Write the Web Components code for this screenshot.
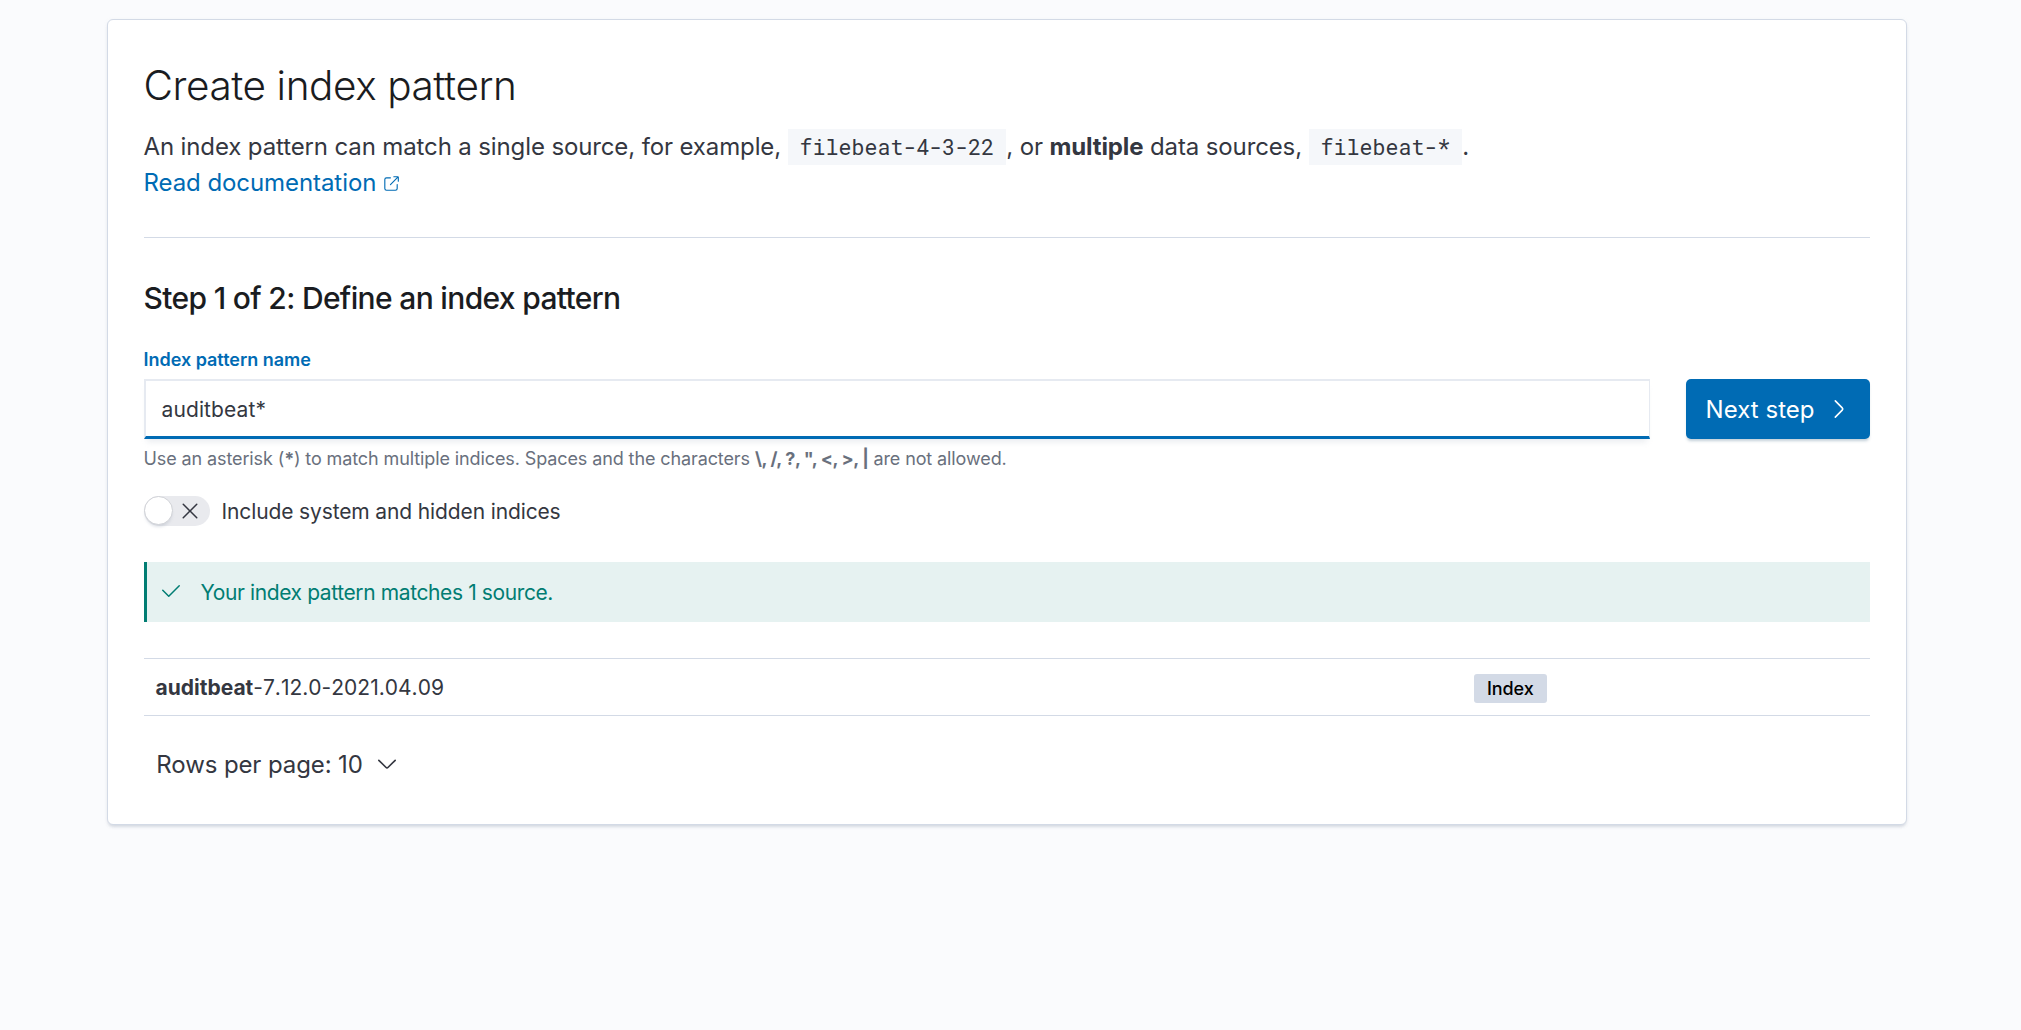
<!DOCTYPE html>
<html lang="en">
<head>
<meta charset="utf-8">
<title>Create index pattern</title>
<style>
html,body{margin:0;height:100%}
body{background:#fafbfd;font-family:Inter,"Liberation Sans",sans-serif;font-size:21px;color:#343741;letter-spacing:-.005em;font-kerning:normal}
</style>
</head>
<body>
<index-pattern-page></index-pattern-page>
<script>
const define = (name, css, html) => customElements.define(name, class extends HTMLElement {
  constructor() {
    super();
    this.attachShadow({mode: 'open'}).innerHTML =
      `<style>*{box-sizing:border-box}${css}</style>${typeof html === 'function' ? html(this) : html}`;
  }
});

const ICONS = {
  popout: 'M13 8.5a.5.5 0 111 0V12a2 2 0 01-2 2H4a2 2 0 01-2-2V4a2 2 0 012-2h3.5a.5.5 0 010 1H4a1 1 0 00-1 1v8a1 1 0 001 1h8a1 1 0 001-1V8.5zm-5.12.339a.5.5 0 11-.706-.707L13.305 2H10.5a.5.5 0 110-1H14a1 1 0 011 1v3.5a.5.5 0 11-1 0V2.72L7.88 8.838z',
  right: 'M5.157 13.069l4.611-4.685a.546.546 0 000-.768L5.158 2.93a.552.552 0 010-.771.53.53 0 01.759 0l4.61 4.684a1.65 1.65 0 010 2.312l-4.61 4.684a.53.53 0 01-.76 0 .552.552 0 010-.771z',
  down: 'M13.069 5.157L8.384 9.768a.546.546 0 01-.768 0L2.93 5.158a.552.552 0 00-.771 0 .53.53 0 000 .759l4.684 4.61a1.65 1.65 0 002.312 0l4.684-4.61a.53.53 0 000-.76.552.552 0 00-.771 0z',
  check: 'M6.5 12a.502.502 0 01-.354-.146l-4-4a.502.502 0 01.708-.708L6.5 10.793l6.646-6.647a.502.502 0 01.708.708l-7 7A.502.502 0 016.5 12',
  cross: 'M7.293 8L3.146 3.854a.5.5 0 11.708-.708L8 7.293l4.146-4.147a.5.5 0 01.708.708L8.707 8l4.147 4.146a.5.5 0 01-.708.708L8 8.707l-4.146 4.147a.5.5 0 01-.708-.708L7.293 8z'
};

define('ui-icon',
  `:host{display:inline-block;flex:none;width:24px;height:24px}svg{display:block;width:100%;height:100%;fill:currentColor}`,
  el => `<svg viewBox="0 0 16 16" aria-hidden="true"><path d="${ICONS[el.getAttribute('type')]}"/></svg>`);

define('ui-panel',
  `:host{display:block;box-sizing:border-box;width:1800px;padding:36px;background:#fff;border:1px solid #d3dae6;border-radius:6px;box-shadow:0 3px 3px -1px rgba(152,162,179,.3),0 1px 5px -2px rgba(152,162,179,.3)}`,
  `<slot></slot>`);

define('ui-code',
  `:host{display:inline;font-family:"Roboto Mono","Liberation Mono",monospace;font-size:21.6px;letter-spacing:.0008em;background:#f5f7fa;padding:3px 12px 4.2px;line-height:1}`,
  `<slot></slot>`);

define('ui-link',
  `:host{color:#006bb4;letter-spacing:-.003em}ui-icon{width:18px;height:18px;margin-left:5.5px;vertical-align:-1.5px}`,
  `<slot></slot><ui-icon type="popout"></ui-icon>`);

define('page-header',
  `:host{display:block;padding-bottom:36px;border-bottom:1px solid #d3dae6}
  h1{margin:0 0 13px;font-size:40.5px;line-height:60px;font-weight:300;letter-spacing:-.0105em;color:#1a1c21}
  p{margin:0;font-size:24px;line-height:36px;letter-spacing:-.0052em}b{font-weight:700}`,
  `<h1>Create index pattern</h1>
  <p>An index pattern can match a single source, for example, <ui-code>filebeat-4-3-22</ui-code>, or <b>multiple</b> data sources, <ui-code>filebeat-*</ui-code>.<br><ui-link>Read documentation</ui-link></p>`);

define('ui-field',
  `:host{display:block;flex:1}
  label{display:block;font-size:18px;line-height:27px;font-weight:600;letter-spacing:-.001em;color:#006bb4;margin-bottom:6px}
  .box{height:60px;padding:0 0 0 16px;line-height:58px;letter-spacing:.005em;border:2px solid #e6eaf1;border-right-width:1px;border-bottom:3px solid #006bb4;background:#fff;box-shadow:0 6px 6px -3px rgba(152,162,179,.2)}
  .help{margin-top:6px;font-size:18px;line-height:27px;color:#69707d}::slotted(b){font-weight:700;letter-spacing:-.022em}`,
  `<label>Index pattern name</label><div class="box"><slot name="value"></slot></div><div class="help"><slot></slot></div>`);

define('ui-button',
  `:host{display:flex;box-sizing:border-box;align-items:center;justify-content:space-between;width:184px;height:60px;padding:0 19px 0 20px;margin-top:33px;border-radius:5px;background:#006bb4;color:#fff;font-size:24px;letter-spacing:.002em;box-shadow:0 3px 3px -1px rgba(54,97,126,.3)}`,
  `<span><slot></slot></span><ui-icon type="right"></ui-icon>`);

define('ui-switch',
  `:host{display:flex;align-items:center;gap:12px;height:30px;letter-spacing:-.006em}
  .track{display:flex;align-items:flex-start;justify-content:space-between;width:66px;height:30px;padding-right:7.1px;border-radius:15px;background:#e9eaee}
  ui-icon{align-self:center}
  .thumb{width:29px;height:29px;border-radius:50%;background:#fff;border:1px solid #cfd1d6;box-shadow:0 3px 3px -1px rgba(152,162,179,.3)}`,
  `<span class="track"><span class="thumb"></span><ui-icon type="cross"></ui-icon></span><span><slot></slot></span>`);

define('ui-callout',
  `:host{display:flex;box-sizing:border-box;align-items:center;gap:18px;height:60px;padding-left:12px;border-left:3px solid #017d73;background:#e6f2f1;color:#017d73;letter-spacing:-.0185em}ui-icon{margin-bottom:2px}`,
  `<ui-icon type="check"></ui-icon><span><slot></slot></span>`);

define('ui-badge',
  `:host{display:block;height:29px;margin-top:2px;padding:0 13px;border-radius:3px;background:#d3dae6;color:#000;font-size:18px;line-height:29px;font-weight:500}`,
  `<slot></slot>`);

define('match-row',
  `:host{display:flex;box-sizing:border-box;align-items:center;height:58px;border:solid #d3dae6;border-width:1px 0;padding-left:12px}
  .name{width:1318.5px}::slotted(b){font-weight:700;letter-spacing:0}::slotted(.rest){font-kerning:none;letter-spacing:.0005em}`,
  `<span class="name"><slot></slot></span><ui-badge><slot name="tag"></slot></ui-badge>`);

define('rows-select',
  `:host{display:flex;align-items:center;gap:12px;height:48px;padding-left:12.8px;font-size:24px}`,
  `<span><slot></slot></span><ui-icon type="down"></ui-icon>`);

define('index-pattern-page',
  `:host{display:flex;justify-content:flex-start;align-items:flex-start;padding:19px 0 0 106.5px}
  h2{margin:36px 0 24px;font-size:30px;line-height:48px;font-weight:500;letter-spacing:-.022em;color:#1a1c21}
  .row{display:flex;gap:36px;align-items:flex-start}
  ui-switch{margin-top:24px}ui-callout,match-row{margin-top:36px}rows-select{margin-top:24px}`,
  `<ui-panel>
    <page-header></page-header>
    <h2>Step 1 of 2: Define an index pattern</h2>
    <div class="row">
      <ui-field><span slot="value">auditbeat*</span>Use an asterisk (<b>*</b>) to match multiple indices. Spaces and the characters <b>\\, /, ?, ", &lt;, &gt;, |</b> are not allowed.</ui-field>
      <ui-button>Next step</ui-button>
    </div>
    <ui-switch>Include system and hidden indices</ui-switch>
    <ui-callout>Your index pattern matches 1 source.</ui-callout>
    <match-row><b>auditbeat</b><span class="rest">-7.12.0-2021.04.09</span><span slot="tag">Index</span></match-row>
    <rows-select>Rows per page: 10</rows-select>
  </ui-panel>`);
</script>
</body>
</html>
